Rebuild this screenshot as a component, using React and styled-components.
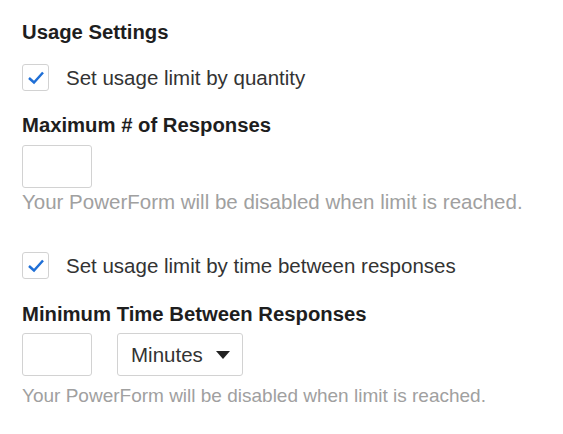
import React from 'react';
import styled, { createGlobalStyle } from 'styled-components';

const GlobalStyle = createGlobalStyle`
  body {
    margin: 0;
    background: #ffffff;
    font-family: "Liberation Sans", Arial, sans-serif;
  }
`;

const Panel = styled.div`
  padding: 20px 22px;
  display: flex;
  flex-direction: column;
  align-items: flex-start;
`;

const Heading = styled.h3`
  margin: ${p => p.$top || 0}px 0 0;
  font-size: 20.3px;
  font-weight: 700;
  color: #1e1e1e;
  line-height: 24px;
`;

const CheckRow = styled.label`
  display: flex;
  align-items: center;
  gap: 17px;
  margin-top: ${p => p.$top || 0}px;
  font-size: 20.5px;
  line-height: 24px;
  color: #333333;
  cursor: pointer;
`;

const Box = styled.span`
  width: 27px;
  height: 27px;
  box-sizing: border-box;
  border: 1px solid #d2d2d2;
  border-radius: 3px;
  display: flex;
  align-items: center;
  justify-content: center;
  background: #fff;
`;

const FieldRow = styled.div`
  display: flex;
  gap: 25px;
  margin-top: ${p => p.$top || 0}px;
`;

const NumberInput = styled.input`
  width: 70px;
  height: 43px;
  box-sizing: border-box;
  border: 1px solid #d2d2d2;
  border-radius: 3px;
  padding: 0 8px;
  font-size: 20px;
  font-family: inherit;
  outline: none;
`;

const Select = styled.div`
  width: 126px;
  height: 43px;
  box-sizing: border-box;
  border: 1px solid #d2d2d2;
  border-radius: 3px;
  display: flex;
  align-items: center;
  justify-content: space-between;
  padding: 0 12px 0 13px;
  font-size: 20.5px;
  color: #333;
`;

const Caret = styled.span`
  width: 0;
  height: 0;
  border-left: 7px solid transparent;
  border-right: 7px solid transparent;
  border-top: 8px solid #222;
`;

const Help = styled.p`
  margin: ${p => p.$top || 0}px 0 0;
  font-size: ${p => p.$size || 20.5}px;
  line-height: 24px;
  color: #a0a0a0;
`;

const Check = () => (
  <Box>
    <svg width="18" height="15" viewBox="0 0 18 15">
      <path d="M2 8 L7 12.5 L16 2.5" fill="none" stroke="#1f6fd6" strokeWidth="2.5" />
    </svg>
  </Box>
);

export default function App() {
  return (
    <>
      <GlobalStyle />
      <Panel>
        <Heading>Usage Settings</Heading>
        <CheckRow $top={20}>
          <Check />
          Set usage limit by quantity
        </CheckRow>
        <Heading $top={22}>Maximum # of Responses</Heading>
        <FieldRow $top={8}>
          <NumberInput />
        </FieldRow>
        <Help $top={2}>Your PowerForm will be disabled when limit is reached.</Help>
        <CheckRow $top={38}>
          <Check />
          Set usage limit by time between responses
        </CheckRow>
        <Heading $top={23}>Minimum Time Between Responses</Heading>
        <FieldRow $top={7}>
          <NumberInput />
          <Select>
            Minutes
            <Caret />
          </Select>
        </FieldRow>
        <Help $top={8} $size={19}>Your PowerForm will be disabled when limit is reached.</Help>
      </Panel>
    </>
  );
}
